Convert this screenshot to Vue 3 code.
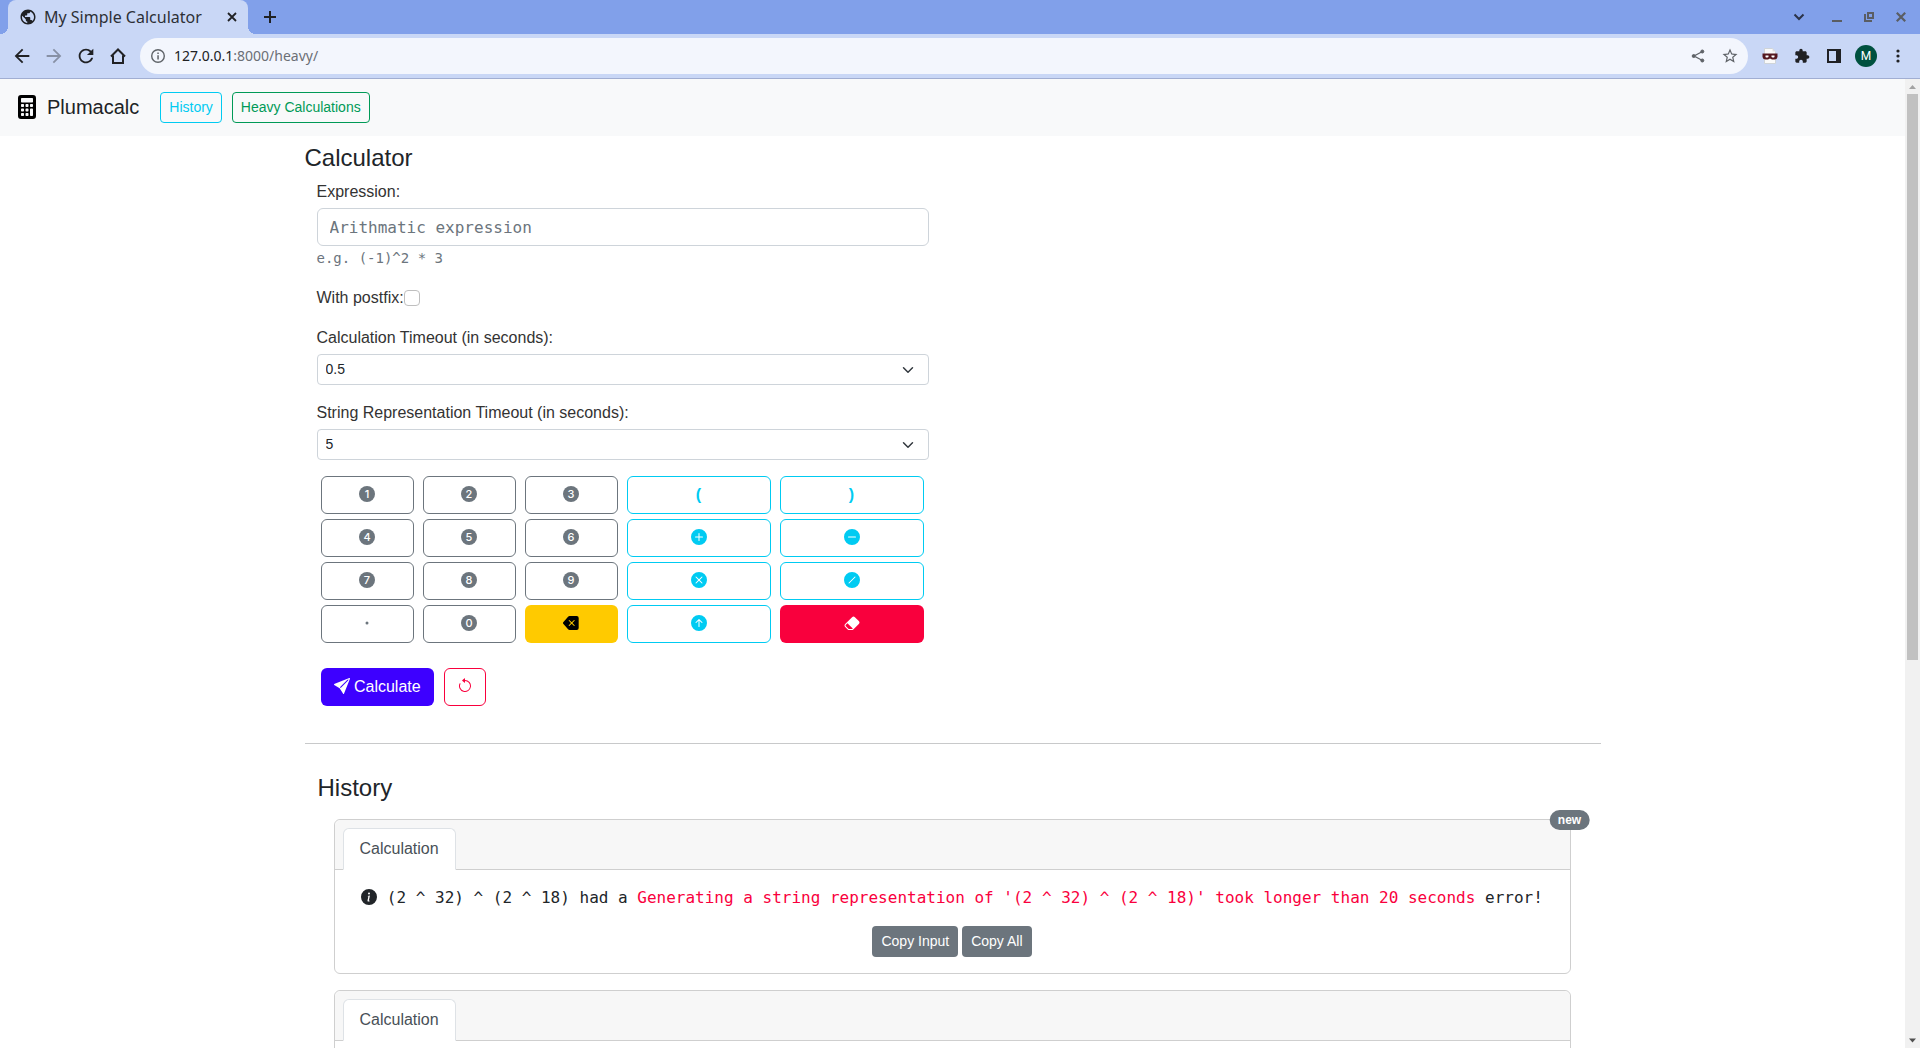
<script setup>
import { ref } from 'vue'

const expression = ref('')
const withPostfix = ref(false)
const calcTimeout = ref('0.5')
const stringTimeout = ref('5')
const timeouts = ['0.5', '1', '2', '5', '10', '20']

const icons = {
  plus: 'M16 8A8 8 0 1 1 0 8a8 8 0 0 1 16 0zM8.5 4.5a.5.5 0 0 0-1 0v3h-3a.5.5 0 0 0 0 1h3v3a.5.5 0 0 0 1 0v-3h3a.5.5 0 0 0 0-1h-3v-3z',
  minus: 'M16 8A8 8 0 1 1 0 8a8 8 0 0 1 16 0zM4.5 7.5a.5.5 0 0 0 0 1h7a.5.5 0 0 0 0-1h-7z',
  times: 'M16 8A8 8 0 1 1 0 8a8 8 0 0 1 16 0zM5.354 4.646a.5.5 0 1 0-.708.708L7.293 8l-2.647 2.646a.5.5 0 0 0 .708.708L8 8.707l2.646 2.647a.5.5 0 0 0 .708-.708L8.707 8l2.647-2.646a.5.5 0 0 0-.708-.708L8 7.293 5.354 4.646z',
  divide: 'M16 8A8 8 0 1 1 0 8a8 8 0 0 1 16 0zm-4.646-2.646a.5.5 0 0 0-.708-.708l-6 6a.5.5 0 0 0 .708.708l6-6z',
  power: 'M16 8A8 8 0 1 0 0 8a8 8 0 0 0 16 0zm-7.5 3.5a.5.5 0 0 1-1 0V5.707L5.354 7.854a.5.5 0 1 1-.708-.708l3-3a.5.5 0 0 1 .708 0l3 3a.5.5 0 0 1-.708.708L8.5 5.707V11.5z',
  dot: 'M8 9.5a1.5 1.5 0 1 0 0-3 1.5 1.5 0 0 0 0 3z',
  backspace: 'M15.683 3a2 2 0 0 0-2-2h-7.08a2 2 0 0 0-1.519.698L.241 7.35a1 1 0 0 0 0 1.302l4.843 5.65A2 2 0 0 0 6.603 15h7.08a2 2 0 0 0 2-2V3zM5.829 5.854a.5.5 0 1 1 .707-.708l2.147 2.147 2.146-2.147a.5.5 0 1 1 .707.708L9.39 8l2.146 2.146a.5.5 0 0 1-.707.708L8.683 8.707l-2.147 2.147a.5.5 0 0 1-.707-.708L7.976 8 5.829 5.854z',
  eraser: 'M8.086 2.207a2 2 0 0 1 2.828 0l3.879 3.879a2 2 0 0 1 0 2.828l-5.5 5.5A2 2 0 0 1 7.879 15H5.12a2 2 0 0 1-1.414-.586l-2.5-2.5a2 2 0 0 1 0-2.828l6.879-6.879zm.66 11.34L3.453 8.254 1.914 9.793a1 1 0 0 0 0 1.414l2.5 2.5a1 1 0 0 0 .707.293H7.88a1 1 0 0 0 .707-.293l.16-.16z'
}

const digit = d => ({ value: d, digit: d, look: 'outline-secondary' })
const op = (value, icon) => ({ value, icon, look: 'outline-info' })
const keys = [
  digit('1'), digit('2'), digit('3'),
  { value: '(', text: '(', look: 'outline-info' },
  { value: ')', text: ')', look: 'outline-info' },
  digit('4'), digit('5'), digit('6'), op('+', 'plus'), op('-', 'minus'),
  digit('7'), digit('8'), digit('9'), op('*', 'times'), op('/', 'divide'),
  { value: '.', icon: 'dot', look: 'outline-secondary' },
  digit('0'),
  { action: 'back', icon: 'backspace', look: 'warning' },
  op('^', 'power'),
  { action: 'clear', icon: 'eraser', look: 'danger' }
]

function press(key) {
  if (key.action === 'back') expression.value = expression.value.slice(0, -1)
  else if (key.action === 'clear') expression.value = ''
  else expression.value += key.value
}

const history = [
  {
    id: 2,
    input: '(2 ^ 32) ^ (2 ^ 18)',
    error: "Generating a string representation of '(2 ^ 32) ^ (2 ^ 18)' took longer than 20 seconds",
    fresh: true
  },
  { id: 1 }
]
</script>

<template>
  <div class="browser">
    <div class="tabstrip">
      <div class="tab">
        <svg class="favicon" width="18" height="18" viewBox="0 0 24 24" fill="#202124"><path d="M12 2C6.48 2 2 6.48 2 12s4.48 10 10 10 10-4.48 10-10S17.52 2 12 2zm-1 17.93c-3.95-.49-7-3.85-7-7.93 0-.62.08-1.21.21-1.79L9 15v1c0 1.1.9 2 2 2v1.93zm6.9-2.54c-.26-.81-1-1.39-1.9-1.39h-1v-3c0-.55-.45-1-1-1H8v-2h2c.55 0 1-.45 1-1V7h2c1.1 0 2-.9 2-2v-.41c2.93 1.19 5 4.06 5 7.41 0 2.08-.8 3.97-2.1 5.39z" /></svg>
        <span class="tab-title">My Simple Calculator</span>
        <button class="plain small" aria-label="Close tab">
          <svg width="10" height="10" viewBox="0 0 10 10" stroke="#202124" stroke-width="1.8"><path d="M1 1l8 8M9 1l-8 8" /></svg>
        </button>
      </div>
      <button class="plain new-tab" aria-label="New tab">
        <svg width="12" height="12" viewBox="0 0 12 12" stroke="#202124" stroke-width="2"><path d="M6 0v12M0 6h12" /></svg>
      </button>
      <div class="window-buttons">
        <button class="plain search-tabs" aria-label="Search tabs">
          <svg width="12" height="8" viewBox="0 0 12 8" fill="none" stroke="#2b3349" stroke-width="2"><path d="M1.500 1.500L6 6l4.500-4.500" /></svg>
        </button>
        <button class="plain" aria-label="Minimize">
          <svg width="10" height="10" viewBox="0 0 10 10" fill="#5a5d63"><path d="M0 8h10v2H0z" /></svg>
        </button>
        <button class="plain" aria-label="Restore">
          <svg width="10" height="10" viewBox="0 0 10 10" fill="none" stroke="#5a5d63" stroke-width="2"><path d="M4 1h5v5H4zM1 2v7h7" /></svg>
        </button>
        <button class="plain" aria-label="Close window">
          <svg width="10" height="10" viewBox="0 0 10 10" stroke="#5a5d63" stroke-width="2.200"><path d="M.8.8l8.400 8.400M9.200.8L.8 9.200" /></svg>
        </button>
      </div>
    </div>

    <div class="toolbar">
      <button class="plain" aria-label="Back">
        <svg width="22" height="22" viewBox="0 0 24 24" fill="#202124"><path d="M20 11H7.830l5.590-5.590L12 4l-8 8 8 8 1.410-1.410L7.830 13H20v-2z" /></svg>
      </button>
      <button class="plain" aria-label="Forward">
        <svg width="22" height="22" viewBox="0 0 24 24" fill="#8790a5"><path d="M12 4l-1.410 1.410L16.170 11H4v2h12.170l-5.580 5.590L12 20l8-8z" /></svg>
      </button>
      <button class="plain" aria-label="Reload">
        <svg width="22" height="22" viewBox="0 0 24 24" fill="#202124"><path d="M17.650 6.350C16.200 4.900 14.210 4 12 4c-4.420 0-7.990 3.580-7.990 8s3.570 8 7.990 8c3.730 0 6.840-2.550 7.730-6h-2.080c-.82 2.330-3.040 4-5.650 4-3.310 0-6-2.690-6-6s2.690-6 6-6c1.660 0 3.140.69 4.220 1.780L13 11h7V4l-2.350 2.350z" /></svg>
      </button>
      <button class="plain" aria-label="Home">
        <svg width="16" height="16" viewBox="0 0 16 16" fill="none" stroke="#202124" stroke-width="2"><path d="M1 8.500L8 1.500l7 7M3 7.500V15h10V7.500" /></svg>
      </button>
      <div class="omnibox">
        <svg width="14" height="14" viewBox="0 0 14 14"><circle cx="7" cy="7" r="6.300" fill="none" stroke="#5f6368" stroke-width="1.400" /><path d="M6.300 6.200h1.500v4.300H6.300zM6.300 3.400h1.500v1.500H6.300z" fill="#5f6368" /></svg>
        <span class="url"><span class="host">127.0.0.1</span>:8000/heavy/</span>
        <button class="plain" aria-label="Share">
          <svg width="14" height="14" viewBox="0 0 14 14" fill="#5f6368" stroke="#5f6368"><path d="M11.500 2.500L3 7l8.500 4.500" fill="none" stroke-width="1.300" /><circle cx="11.300" cy="2.500" r="1.500" /><circle cx="2.700" cy="7" r="1.500" /><circle cx="11.300" cy="11.500" r="1.500" /></svg>
        </button>
        <button class="plain" aria-label="Bookmark this page">
          <svg width="18" height="18" viewBox="0 0 24 24" fill="#5f6368"><path d="M22 9.240l-7.190-.62L12 2 9.190 8.630 2 9.240l5.460 4.730L5.820 21 12 17.270 18.180 21l-1.630-7.030L22 9.240zM12 15.400l-3.760 2.270 1-4.280-3.320-2.880 4.380-.38L12 6.100l1.710 4.040 4.380.38-3.320 2.880 1 4.280L12 15.400z" /></svg>
        </button>
      </div>
      <button class="plain" aria-label="Masked page extension">
        <svg width="16" height="16" viewBox="0 0 16 16"><path d="M2.500.5h8l3 3v12h-11z" fill="#fafafa" stroke="#cfd4d8" /><path d="M10.500.5v3h3z" fill="#ddd" /><path d="M.5 5.500h15v3.500q-.5 2.500-3 2.500h-2.500L8 10.500 6 11.500H3.500Q1 11.500.5 9z" fill="#541820" /><path d="M3.500 7.500h3v1.500q-2 1-3 0zM9.500 7.500h3v1.500q-1 1-3 0z" fill="#fff" /></svg>
      </button>
      <button class="plain" aria-label="Extensions">
        <svg width="16" height="16" viewBox="0 0 24 24" fill="#202124"><path d="M20.500 11H19V7c0-1.100-.9-2-2-2h-4V3.500C13 2.120 11.880 1 10.500 1S8 2.120 8 3.500V5H4c-1.100 0-1.990.9-1.990 2v3.800H3.500c1.490 0 2.700 1.210 2.700 2.700s-1.210 2.700-2.700 2.700H2V20c0 1.100.9 2 2 2h3.800v-1.500c0-1.490 1.210-2.700 2.700-2.700 1.490 0 2.700 1.210 2.700 2.700V22H17c1.100 0 2-.9 2-2v-4h1.500c1.380 0 2.500-1.120 2.500-2.500S21.880 11 20.500 11z" /></svg>
      </button>
      <button class="plain" aria-label="Side panel">
        <svg width="14" height="14" viewBox="0 0 14 14"><path d="M0 0h14v14H0zM2 2v10h7V2z" fill="#202124" fill-rule="evenodd" /></svg>
      </button>
      <button class="plain" aria-label="Profile"><span class="avatar">M</span></button>
      <button class="plain" aria-label="Menu">
        <svg width="4" height="14" viewBox="0 0 4 14" fill="#202124"><circle cx="2" cy="2" r="1.600" /><circle cx="2" cy="7" r="1.600" /><circle cx="2" cy="12" r="1.600" /></svg>
      </button>
    </div>

    <div class="viewport">
      <div class="page">
        <nav class="navbar">
          <a class="brand" href="#">
            <svg width="24" height="24" viewBox="0 0 16 16" fill="#000"><path d="M2 2a2 2 0 0 1 2-2h8a2 2 0 0 1 2 2v12a2 2 0 0 1-2 2H4a2 2 0 0 1-2-2V2zm2 .5v2a.5.5 0 0 0 .5.5h7a.5.5 0 0 0 .5-.5v-2a.5.5 0 0 0-.5-.5h-7a.5.5 0 0 0-.5.5zm0 4v1a.5.5 0 0 0 .5.5h1a.5.5 0 0 0 .5-.5v-1a.5.5 0 0 0-.5-.5h-1a.5.5 0 0 0-.5.5zM4.500 9a.5.5 0 0 0-.5.5v1a.5.5 0 0 0 .5.5h1a.5.5 0 0 0 .5-.5v-1a.5.5 0 0 0-.5-.5h-1zM4 12.500v1a.5.5 0 0 0 .5.5h1a.5.5 0 0 0 .5-.5v-1a.5.5 0 0 0-.5-.5h-1a.5.5 0 0 0-.5.5zM7.500 6a.5.5 0 0 0-.5.5v1a.5.5 0 0 0 .5.5h1a.5.5 0 0 0 .5-.5v-1a.5.5 0 0 0-.5-.5h-1zM7 9.500v1a.5.5 0 0 0 .5.5h1a.5.5 0 0 0 .5-.5v-1a.5.5 0 0 0-.5-.5h-1a.5.5 0 0 0-.5.5zm.5 2.500a.5.5 0 0 0-.5.5v1a.5.5 0 0 0 .5.5h1a.5.5 0 0 0 .5-.5v-1a.5.5 0 0 0-.5-.5h-1zM10 6.500v1a.5.5 0 0 0 .5.5h1a.5.5 0 0 0 .5-.5v-1a.5.5 0 0 0-.5-.5h-1a.5.5 0 0 0-.5.5zm.5 2.500a.5.5 0 0 0-.5.5v4a.5.5 0 0 0 .5.5h1a.5.5 0 0 0 .5-.5v-4a.5.5 0 0 0-.5-.5h-1z" /></svg>
            <span>Plumacalc</span>
          </a>
          <a class="btn sm outline-info" href="#history">History</a>
          <a class="btn sm outline-success" href="#heavy">Heavy Calculations</a>
        </nav>

        <main class="container">
          <h1 class="title">Calculator</h1>
          <form class="calculator" @submit.prevent>
            <div class="field">
              <label for="expression">Expression:</label>
              <input id="expression" v-model="expression" class="control" type="text" placeholder="Arithmatic expression" aria-describedby="expression-help">
              <small id="expression-help" class="help">e.g. (-1)^2 * 3</small>
            </div>
            <div class="field check">
              <label for="postfix">With postfix:</label>
              <input id="postfix" v-model="withPostfix" type="checkbox">
            </div>
            <div class="field">
              <label for="calc-timeout">Calculation Timeout (in seconds):</label>
              <select id="calc-timeout" v-model="calcTimeout" class="select">
                <option v-for="t in timeouts" :key="t" :value="t">{{ t }}</option>
              </select>
            </div>
            <div class="field">
              <label for="string-timeout">String Representation Timeout (in seconds):</label>
              <select id="string-timeout" v-model="stringTimeout" class="select">
                <option v-for="t in timeouts" :key="t" :value="t">{{ t }}</option>
              </select>
            </div>

            <div class="keypad">
              <button v-for="(key, i) in keys" :key="i" type="button" class="btn" :class="key.look" :aria-label="key.action || key.value" @click="press(key)">
                <b v-if="key.text">{{ key.text }}</b>
                <svg v-else-if="key.digit" class="icon" viewBox="0 0 16 16">
                  <circle cx="8" cy="8" r="8" />
                  <text class="digit" x="8" y="12" text-anchor="middle">{{ key.digit }}</text>
                </svg>
                <svg v-else class="icon" viewBox="0 0 16 16"><path :d="icons[key.icon]" /></svg>
              </button>
            </div>

            <div class="actions">
              <button type="submit" class="btn primary">
                <svg class="icon" viewBox="0 0 16 16"><path d="M15.964.686a.5.5 0 0 0-.65-.65L.767 5.855H.766l-.452.18a.5.5 0 0 0-.082.887l.41.26.001.002 4.995 3.178 3.178 4.995.002.002.26.41a.5.5 0 0 0 .886-.083l6-15Zm-1.833 1.890L6.637 10.070l-.215-.338a.5.5 0 0 0-.154-.154l-.338-.215 7.494-7.494 1.178-.471-.47 1.178Z" /></svg>
                Calculate
              </button>
              <button type="reset" class="btn outline-danger" aria-label="Reset">
                <svg class="icon" viewBox="0 0 16 16"><path d="M8 3a5 5 0 1 1-4.546 2.914.5.5 0 0 0-.908-.417A6 6 0 1 0 8 2v1z" /><path d="M8 4.466V.534a.25.25 0 0 0-.41-.192L5.230 2.308a.25.25 0 0 0 0 .384l2.360 1.966A.25.25 0 0 0 8 4.466z" /></svg>
              </button>
            </div>
          </form>

          <hr class="rule">

          <section id="history" class="history">
            <h2 class="title">History</h2>
            <div class="cards">
              <article v-for="item in history" :key="item.id" class="card">
                <span v-if="item.fresh" class="badge">new</span>
                <header class="card-header"><span class="card-tab">Calculation</span></header>
                <div class="card-body">
                  <template v-if="item.input">
                    <p class="result">
                      <svg class="icon" viewBox="0 0 16 16"><path d="M8 16A8 8 0 1 0 8 0a8 8 0 0 0 0 16zm.93-9.412-1 4.705c-.07.34.029.533.304.533.194 0 .487-.07.686-.246l-.088.416c-.287.346-.92.598-1.465.598-.703 0-1.002-.422-.808-1.319l.738-3.468c.064-.293.006-.399-.287-.47l-.451-.081.082-.381 2.290-.287zM8 5.500a1 1 0 1 1 0-2 1 1 0 0 1 0 2z" /></svg>
                      {{ item.input }} had a <span class="error">{{ item.error }}</span> error!
                    </p>
                    <div class="copy">
                      <button type="button" class="btn sm secondary">Copy Input</button>
                      <button type="button" class="btn sm secondary">Copy All</button>
                    </div>
                  </template>
                </div>
              </article>
            </div>
          </section>
        </main>
      </div>

      <div class="scrollbar">
        <svg width="15" height="15" viewBox="0 0 15 15" fill="#a3a3a3"><path d="M4 10l3.500-4 3.500 4z" /></svg>
        <div class="track"><div class="thumb"></div><div class="rest"></div></div>
        <svg width="15" height="15" viewBox="0 0 15 15" fill="#505050"><path d="M4 5.500l3.500 4 3.500-4z" /></svg>
      </div>
    </div>
  </div>
</template>

<style>
body {
  margin: 0;
  overflow: hidden;
}
</style>

<style scoped>
* {
  box-sizing: border-box;
}

.browser {
  display: flex;
  flex-direction: column;
  height: 100vh;
  overflow: hidden;
  font: 16px/24px "Liberation Sans", Arial, sans-serif;
  color: #212529;
  background: #fff;
}

/* Browser chrome */
.plain {
  display: flex;
  flex: none;
  align-items: center;
  justify-content: center;
  width: 32px;
  height: 32px;
  padding: 0;
  border: 0;
  background: none;
}

.tabstrip {
  display: flex;
  flex: none;
  align-items: center;
  height: 34px;
  padding: 0 3px 0 8px;
  background: #81a0ea;
}

.tab {
  position: relative;
  display: flex;
  align-items: center;
  width: 240px;
  height: 34px;
  padding: 0 8px 0 11px;
  border-radius: 8px 8px 0 0;
  background: #c9d7f6;
}

.tab::before,
.tab::after {
  content: "";
  position: absolute;
  bottom: 0;
  width: 8px;
  height: 8px;
}

.tab::before {
  right: 100%;
  background: radial-gradient(circle at 0 0, transparent 8px, #c9d7f6 8px);
}

.tab::after {
  left: 100%;
  background: radial-gradient(circle at 100% 0, transparent 8px, #c9d7f6 8px);
}

.tab-title {
  flex: 1;
  margin-left: 7px;
  font: 16px/24px "Noto Sans", sans-serif;
  color: #2d3036;
}

.small {
  width: 16px;
  height: 16px;
}

.new-tab {
  margin-left: 6px;
}

.window-buttons {
  display: flex;
  margin-left: auto;
}

.search-tabs {
  margin-right: 6px;
}

.toolbar {
  display: flex;
  flex: none;
  align-items: center;
  height: 45px;
  padding: 0 6px;
  border-bottom: 1px solid #a1aed2;
  background: #c9d7f6;
}

.omnibox {
  display: flex;
  flex: 1;
  align-items: center;
  height: 36px;
  margin: 0 6px;
  padding: 0 2px 0 11px;
  border-radius: 18px;
  background: #f3f6fd;
}

.url {
  flex: 1;
  margin-left: 9px;
  font: 14px/24px "Noto Sans", sans-serif;
  color: #6b6f76;
}

.host {
  color: #202124;
}

.avatar {
  width: 22px;
  height: 22px;
  border-radius: 50%;
  font: 12px/22px Roboto, sans-serif;
  text-align: center;
  color: #fff;
  background: #00513f;
}

/* Page and scrollbar */
.viewport {
  display: flex;
  flex: 1;
  min-height: 0;
}

.page {
  flex: 1;
  min-width: 0;
  overflow: hidden;
}

.scrollbar {
  display: flex;
  flex-direction: column;
  width: 15px;
  background: #f1f1f1;
}

.track {
  display: flex;
  flex: 1;
  flex-direction: column;
  padding: 0 2px;
}

.thumb {
  flex: 3;
  margin-bottom: -5px;
  background: #c1c1c1;
}

.rest {
  flex: 2;
}

.navbar {
  display: flex;
  align-items: center;
  height: 57px;
  padding: 0 15px 1px;
  background: #f8f9fa;
}

.brand {
  display: flex;
  align-items: center;
  gap: 8px;
  margin-right: 21px;
  font-size: 20px;
  line-height: 30px;
  color: #202326;
  text-decoration: none;
}

.navbar .btn + .btn {
  margin-left: 10px;
}

.container {
  max-width: 1320px;
  margin: 0 auto;
  padding: 7px 12px;
}

.title {
  margin: 0;
  font-size: 24px;
  font-weight: 400;
  line-height: 29px;
}

/* Form */
.calculator {
  width: 50%;
  max-width: 636px;
  padding: 8px 12px 0;
}

.field {
  display: flex;
  flex-direction: column;
  margin-bottom: 16px;
}

.field label {
  margin-bottom: 4px;
  color: #333;
}

.control {
  height: 38px;
  padding: 6px 12px;
  border: 1px solid #ced4da;
  border-radius: 6px;
  font: 16px/24px "DejaVu Sans Mono", monospace;
  color: #212529;
  background: #fff;
}

.control::placeholder {
  color: #6c757d;
  opacity: 1;
}

.help {
  margin-top: 1px;
  font: 14px/23px "DejaVu Sans Mono", monospace;
  color: #6c757d;
}

.check {
  flex-direction: row;
  align-items: center;
}

.field.check label {
  margin: 0;
}

.check input {
  width: 16px;
  height: 16px;
  margin: 0;
  border: 1px solid #bfbfbf;
  border-radius: 4px;
  appearance: none;
  background: #fff;
}

.check input:checked {
  background: #3d00ff;
}

.select {
  height: 31px;
  padding: 4px 36px 4px 8px;
  border: 1px solid #ced4da;
  border-radius: 4px;
  appearance: none;
  font: 14px/21px "Liberation Sans", Arial, sans-serif;
  color: #212529;
  background: #fff url("data:image/svg+xml,%3Csvg xmlns='http://www.w3.org/2000/svg' viewBox='0 0 16 16'%3E%3Cpath fill='none' stroke='%23343a40' stroke-linecap='round' stroke-linejoin='round' stroke-width='2' d='M2 5l6 6 6-6'/%3E%3C/svg%3E") no-repeat right 12px center / 16px 12px;
}

/* Buttons */
.btn {
  padding: 6px 12px;
  border: 1px solid transparent;
  border-radius: 6px;
  font: 16px/24px "Liberation Sans", Arial, sans-serif;
  text-align: center;
  text-decoration: none;
  background: none;
}

.btn.sm {
  padding: 4px 8px;
  border-radius: 4px;
  font-size: 14px;
  line-height: 21px;
}

.outline-secondary {
  border-color: #6c757d;
  color: #6c757d;
}

.outline-info {
  border-color: #00cbf2;
  color: #00cbf2;
}

.outline-success {
  border-color: #009a57;
  color: #009a57;
}

.outline-danger {
  border-color: #f9003d;
  color: #f9003d;
}

.btn.primary {
  color: #fff;
  background: #3d00ff;
}

.btn.secondary {
  color: #fff;
  background: #6c757d;
}

.btn.warning {
  color: #000;
  background: #ffca00;
}

.btn.danger {
  color: #fff;
  background: #f9003d;
}

.icon {
  width: 16px;
  height: 16px;
  vertical-align: -2px;
  fill: currentColor;
}

.digit {
  font: 500 11px Inter, sans-serif;
  fill: #fff;
}

.keypad {
  display: grid;
  grid-template-columns: repeat(3, 93fr) repeat(2, 144fr);
  gap: 5px 9px;
  padding: 0 5px 0 4px;
}

.actions {
  display: flex;
  gap: 10px;
  padding: 25px 4px 0;
}

.rule {
  height: 1px;
  margin: 37px 0 0;
  border: 0;
  background: #c8c9ca;
}

/* History */
.history {
  padding: 29px 14px 0 13px;
}

.cards {
  display: flex;
  flex-direction: column;
  gap: 16px;
  padding: 17px 16px;
}

.card {
  position: relative;
  border: 1px solid #cfcfcf;
  border-radius: 6px;
}

.card-header {
  display: flex;
  padding: 8px 8px 0;
  border-bottom: 1px solid #cfcfcf;
  border-radius: 6px 6px 0 0;
  background: #f7f7f7;
}

.card-tab {
  margin-bottom: -1px;
  padding: 8px 16px;
  border: 1px solid #dee2e6;
  border-bottom-color: #fff;
  border-radius: 6px 6px 0 0;
  color: #495057;
  background: #fff;
}

.card-body {
  padding: 16px;
  text-align: center;
}

.result {
  margin: 0 0 16px;
  font-family: "DejaVu Sans Mono", monospace;
}

.error {
  color: #f9003d;
}

.copy {
  display: flex;
  justify-content: center;
  gap: 4px;
}

.badge {
  position: absolute;
  top: 0;
  right: 0;
  padding: 4px 8px;
  border-radius: 10px;
  font-size: 12px;
  font-weight: 700;
  line-height: 12px;
  color: #fff;
  background: #6c757d;
  transform: translate(50%, -50%);
}
</style>
